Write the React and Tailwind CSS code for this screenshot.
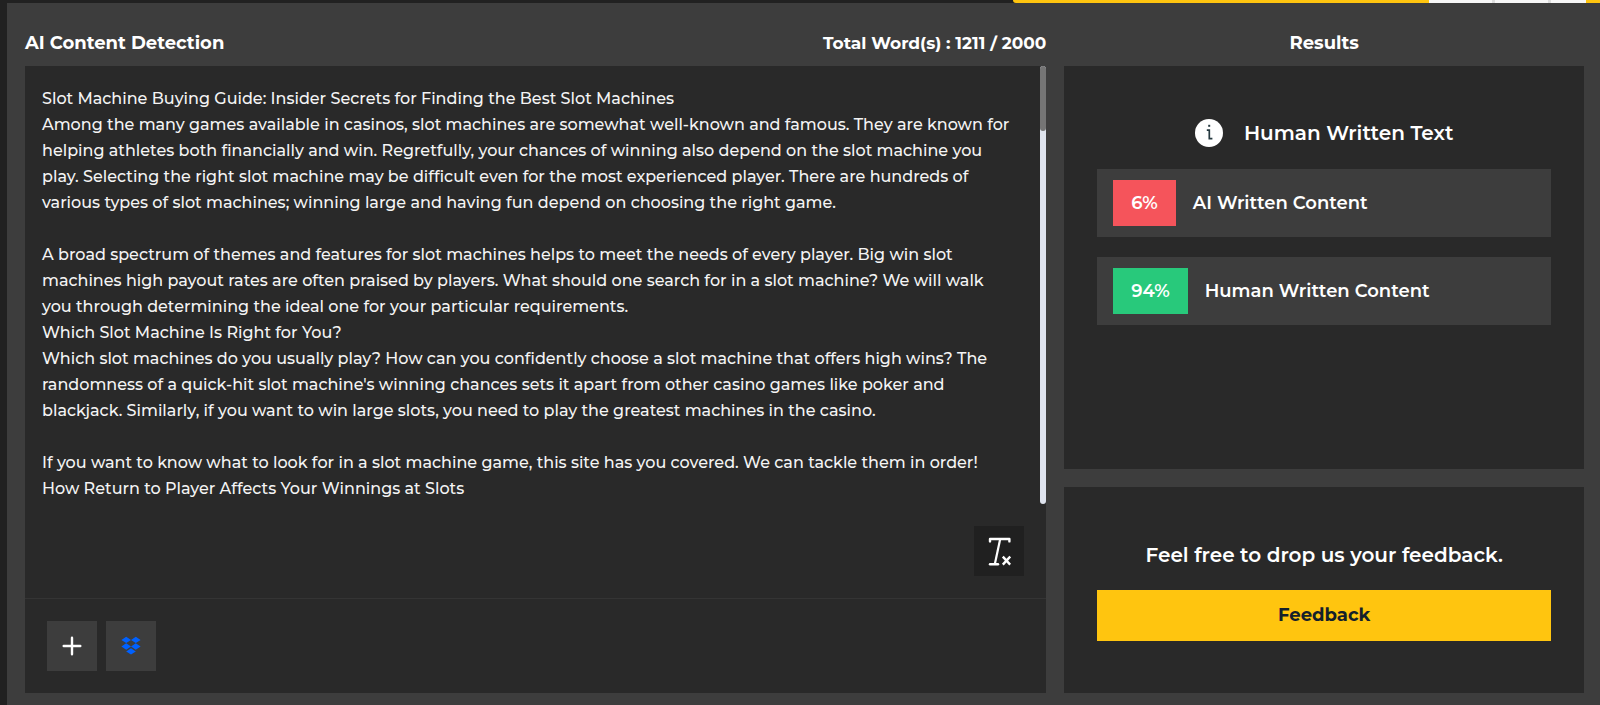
const content = `Slot Machine Buying Guide: Insider Secrets for Finding the Best Slot Machines
Among the many games available in casinos, slot machines are somewhat well-known and famous. They are known for helping athletes both financially and win. Regretfully, your chances of winning also depend on the slot machine you play. Selecting the right slot machine may be difficult even for the most experienced player. There are hundreds of various types of slot machines; winning large and having fun depend on choosing the right game.

A broad spectrum of themes and features for slot machines helps to meet the needs of every player. Big win slot machines high payout rates are often praised by players. What should one search for in a slot machine? We will walk you through determining the ideal one for your particular requirements.
Which Slot Machine Is Right for You?
Which slot machines do you usually play? How can you confidently choose a slot machine that offers high wins? The randomness of a quick-hit slot machine's winning chances sets it apart from other casino games like poker and blackjack. Similarly, if you want to win large slots, you need to play the greatest machines in the casino.

If you want to know what to look for in a slot machine game, this site has you covered. We can tackle them in order!
How Return to Player Affects Your Winnings at Slots`;

function ClearIcon() {
  return (
    <svg viewBox="0 0 24 30" className="h-[30px] w-6" fill="none" stroke="#fff" aria-hidden="true">
      <path d="M3 5.4V3H22.4V5.4" strokeWidth="2.4" strokeLinecap="round" strokeLinejoin="round" />
      <path d="M13.2 3L7.8 28.2" strokeWidth="2.2" />
      <path d="M3 28.2H11" strokeWidth="2.4" strokeLinecap="round" />
      <path d="M15.8 20.6L23.2 28.6M23.2 20.6L15.8 28.6" strokeWidth="2.4" />
    </svg>
  );
}

function PlusIcon() {
  return (
    <svg viewBox="0 0 20 20" className="size-5" stroke="#fff" strokeWidth="2.4" strokeLinecap="round" aria-hidden="true">
      <path d="M10 1.7V18.3M1.7 10H18.3" />
    </svg>
  );
}

function DropboxIcon() {
  return (
    <svg viewBox="0 0 20 20" className="size-5" fill="#0061ff" aria-hidden="true">
      <path d="M5.2 0.7L10 3.9L5.2 7.1L0.4 3.9Z" />
      <path d="M14.8 0.7L19.6 3.9L14.8 7.1L10 3.9Z" />
      <path d="M5.2 7.3L10 10.5L5.2 13.7L0.4 10.5Z" />
      <path d="M14.8 7.3L19.6 10.5L14.8 13.7L10 10.5Z" />
      <path d="M10 12.2L14.8 15.4L10 18.6L5.2 15.4Z" />
    </svg>
  );
}

function InfoIcon() {
  return (
    <svg viewBox="0 0 28 28" className="size-7 shrink-0" aria-hidden="true">
      <circle cx="14" cy="14" r="14" fill="#fff" />
      <rect x="13.2" y="5.8" width="2" height="2" fill="#263a40" />
      <path d="M11.8 11.2H14.3V19.6H17.4" fill="none" stroke="#263a40" strokeWidth="1.7" />
    </svg>
  );
}

function ResultRow({ percent, label, color }) {
  return (
    <li className="flex items-center gap-[17px] bg-[#3d3d3d] px-4 py-[11px] font-semibold">
      <span className={`px-[18px] py-[11px] leading-6 ${color}`}>{percent}</span>
      <span>{label}</span>
    </li>
  );
}

export default function App() {
  return (
    <div className="min-h-screen bg-[#212121] font-[Montserrat,Inter,sans-serif] text-[18px] text-white">
      <div className="flex h-[3px]" aria-hidden="true">
        <div className="w-[63.3%]" />
        <div className="w-[26%] rounded-bl-sm bg-[#ffc50f]" />
        <div className="flex w-[9.8%] gap-[3px] bg-[#dddddd]">
          <div className="w-[40%] bg-[#f7f7f7]" />
          <div className="w-[34%] bg-[#f7f7f7]" />
          <div className="flex-1 bg-[#f7f7f7]" />
        </div>
        <div className="flex-1 bg-[#ffc50f]" />
      </div>

      <main className="ml-[7px] grid min-h-[702px] grid-cols-[minmax(0,1022fr)_minmax(0,520fr)] gap-x-[18px] bg-[#3d3d3d] pr-4 pb-3 pl-[18px]">
        <section className="flex flex-col">
          <header className="flex h-[63px] items-center justify-between pt-[18px] font-bold">
            <h1>
              <label htmlFor="content">AI Content Detection</label>
            </h1>
            <p className="text-[17px]">Total Word(s) : 1211 / 2000</p>
          </header>
          <div className="flex flex-1 flex-col bg-[#292929]">
            <div className="flex h-[438px]">
              <textarea
                id="content"
                defaultValue={content}
                className="flex-1 resize-none overflow-hidden bg-transparent pt-5 pr-[27px] pl-[17px] text-[16px] leading-[26px] font-medium text-[#f4f4f4] outline-none"
              />
              <div className="w-[6px] rounded-full bg-[#dfe4ee]" aria-hidden="true">
                <div className="h-[65px] rounded-full bg-[#757575]" />
              </div>
            </div>
            <div className="flex justify-end pt-[22px] pr-[22px] pb-[22px]">
              <button type="button" aria-label="Clear text" className="flex size-[50px] items-center justify-center bg-[#202020]">
                <ClearIcon />
              </button>
            </div>
            <div className="flex flex-1 gap-[9px] border-t border-[#343434] px-[22px] py-[22px]">
              <button type="button" aria-label="Add file" className="flex size-[50px] items-center justify-center bg-[#3d3d3d]">
                <PlusIcon />
              </button>
              <button type="button" aria-label="Import from Dropbox" className="flex size-[50px] items-center justify-center bg-[#3d3d3d]">
                <DropboxIcon />
              </button>
            </div>
          </div>
        </section>

        <section className="flex flex-col">
          <h2 className="flex h-[63px] items-center justify-center pt-[18px] font-bold">Results</h2>
          <div className="flex-1 bg-[#292929] px-[33px] pt-[53px] pb-8">
            <h3 className="flex items-center justify-center gap-[21px] text-[20px] leading-7 font-semibold">
              <InfoIcon />
              Human Written Text
            </h3>
            <ul className="mt-[22px] flex flex-col gap-5">
              <ResultRow percent="6%" label="AI Written Content" color="bg-[#f5545b]" />
              <ResultRow percent="94%" label="Human Written Content" color="bg-[#28c97b]" />
            </ul>
          </div>
          <div className="mt-[18px] flex h-[206px] flex-col justify-center bg-[#292929] px-[33px] pt-0.5 text-center">
            <p className="text-[20px] leading-7 font-semibold">Feel free to drop us your feedback.</p>
            <button type="button" className="mt-[21px] h-[51px] bg-[#ffc50f] font-bold text-[#14202b]">
              Feedback
            </button>
          </div>
        </section>
      </main>
    </div>
  );
}
